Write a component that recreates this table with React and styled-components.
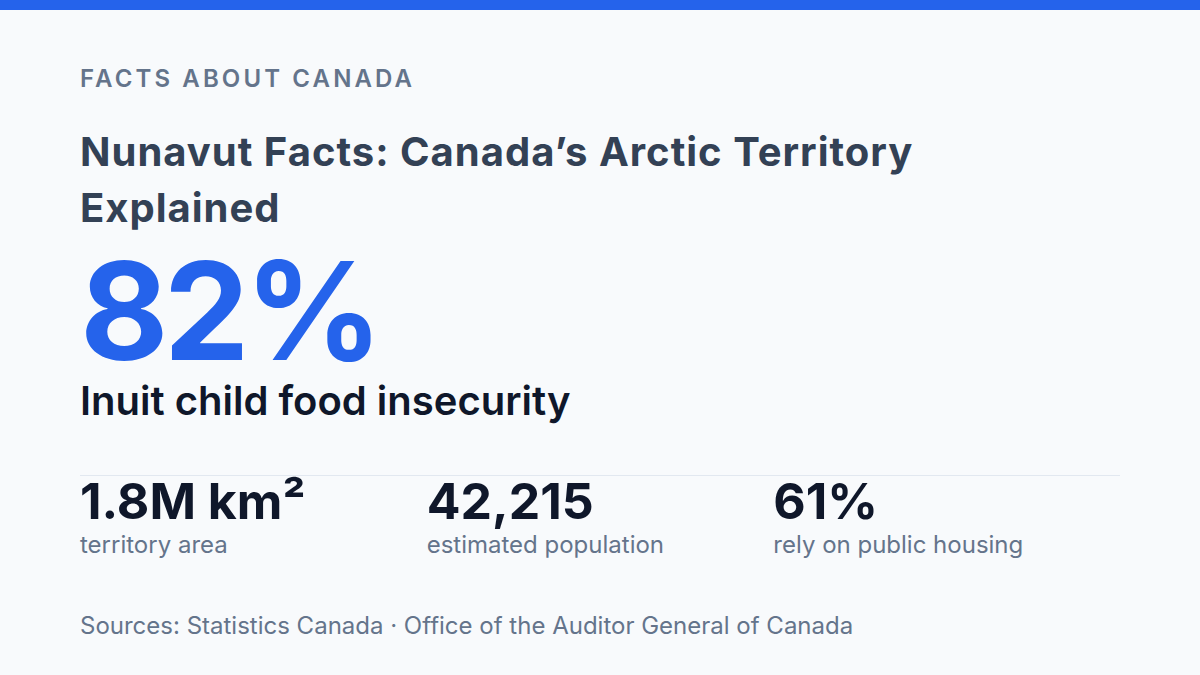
import React from "react";
import styled, { createGlobalStyle } from "styled-components";

const Global = createGlobalStyle`
  html, body { margin: 0; padding: 0; background: #f8fafc; }
  body { font-family: Inter, "Noto Sans", "Liberation Sans", sans-serif; }
  * { box-sizing: border-box; }
`;

const Page = styled.div`
  width: 1200px;
  height: 675px;
  background: #f8fafc;
  display: flex;
  flex-direction: column;
  overflow: hidden;
`;

const TopBar = styled.div`
  height: 10px;
  background: #2563eb;
  flex: none;
`;

const Content = styled.main`
  padding: 55px 80px 0;
  display: flex;
  flex-direction: column;
`;

const Eyebrow = styled.div`
  font-size: 24px;
  line-height: 28px;
  font-weight: 600;
  letter-spacing: 0.13em;
  text-transform: uppercase;
  color: #64748b;
`;

const Title = styled.h1`
  margin: 31px 0 0;
  font-size: 40px;
  line-height: 56px;
  font-weight: 700;
  color: #334155;
  letter-spacing: 1px;
  max-width: 900px;
`;

const BigStat = styled.div`
  margin-top: 14px;
  font-size: 136px;
  line-height: 122px;
  font-weight: 750;
  color: #2563eb;
  letter-spacing: -0.035em;
`;

const BigLabel = styled.div`
  margin-top: 5px;
  font-size: 40px;
  line-height: 48px;
  font-weight: 600;
  color: #0f172a;
`;

const Stats = styled.div`
  margin-top: 50px;
  border-top: 1px solid #e2e8f0;
  display: grid;
  grid-template-columns: repeat(3, 1fr);
`;

const Stat = styled.div`
  display: flex;
  flex-direction: column;
`;

const Value = styled.div`
  font-size: 50px;
  line-height: 50px;
  font-weight: 700;
  color: #0f172a;
`;

const Label = styled.div`
  margin-top: 4px;
  font-size: 24px;
  line-height: 30px;
  color: #64748b;
`;

const Sources = styled.div`
  margin-top: 51px;
  font-size: 24px;
  line-height: 30px;
  color: #64748b;
`;

const stats = [
  { value: "1.8M km²", label: "territory area" },
  { value: "42,215", label: "estimated population" },
  { value: "61%", label: "rely on public housing" },
];

export default function App() {
  return (
    <>
      <Global />
      <Page>
        <TopBar />
        <Content>
          <Eyebrow>Facts about Canada</Eyebrow>
          <Title>Nunavut Facts: Canada’s Arctic Territory Explained</Title>
          <BigStat>82%</BigStat>
          <BigLabel>Inuit child food insecurity</BigLabel>
          <Stats>
            {stats.map((s) => (
              <Stat key={s.label}>
                <Value>{s.value}</Value>
                <Label>{s.label}</Label>
              </Stat>
            ))}
          </Stats>
          <Sources>
            Sources: Statistics Canada · Office of the Auditor General of Canada
          </Sources>
        </Content>
      </Page>
    </>
  );
}
